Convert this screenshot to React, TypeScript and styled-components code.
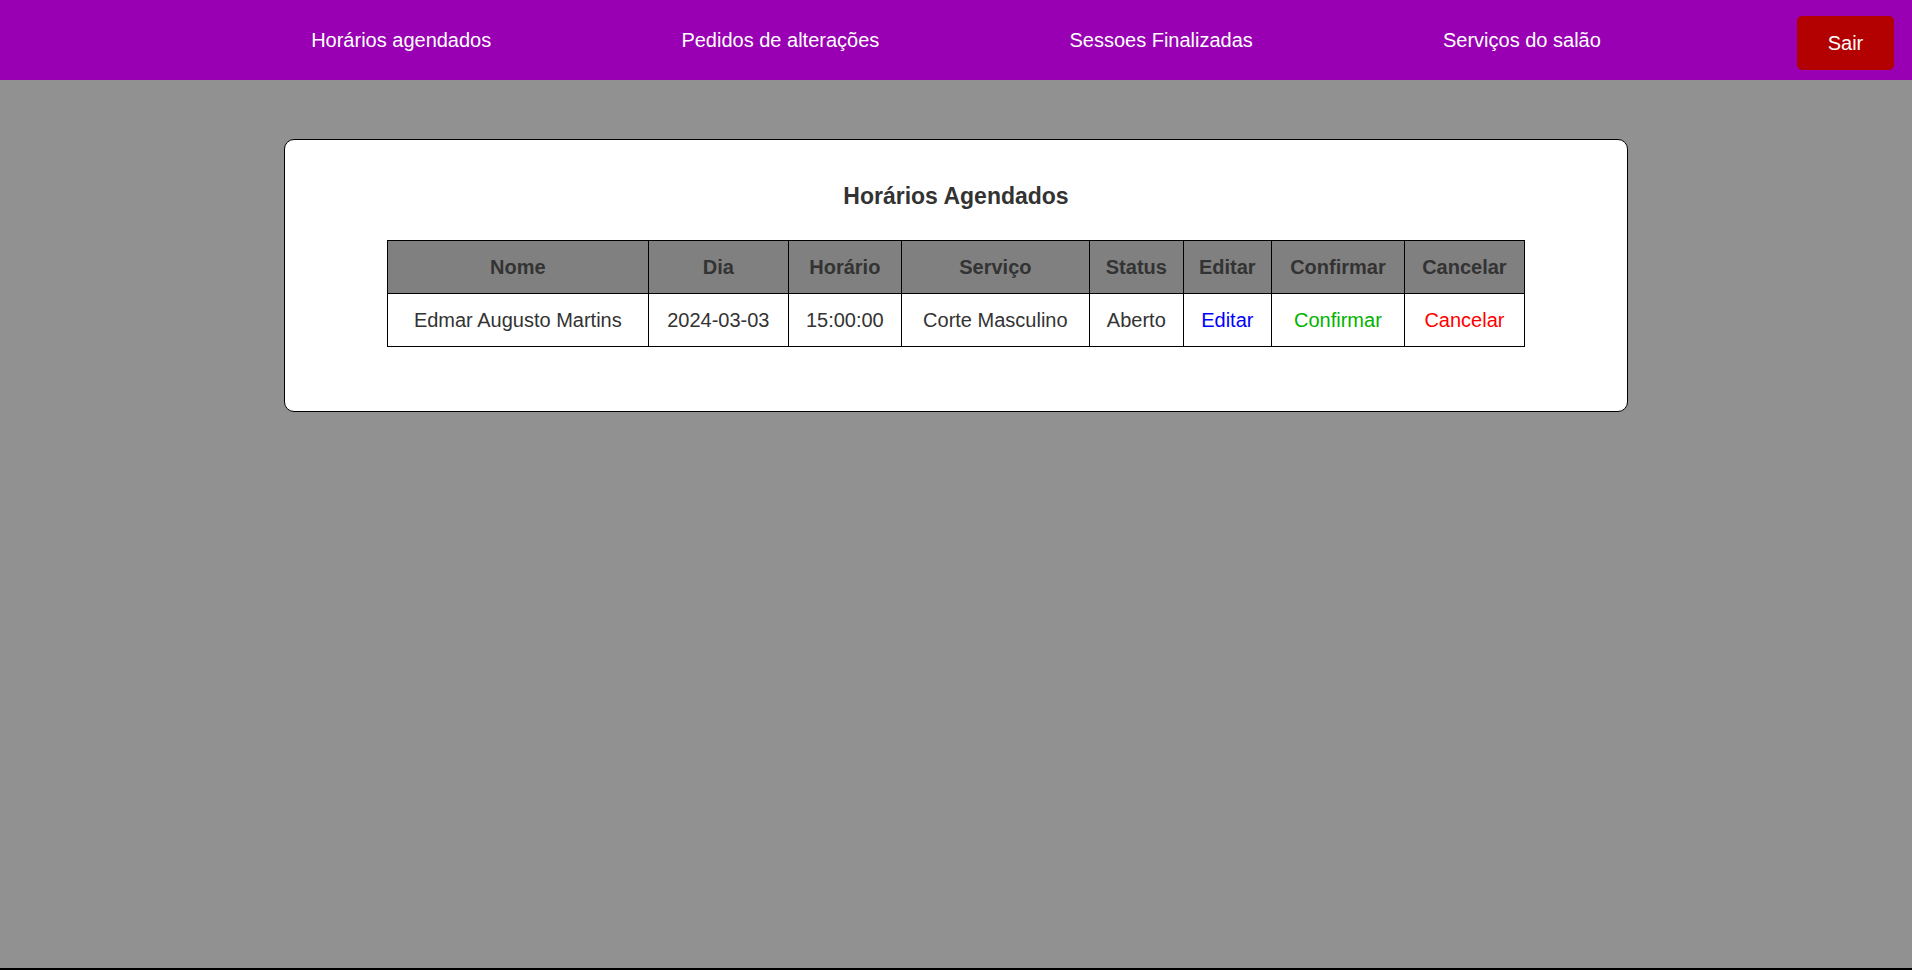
import React from 'react';
import styled, { createGlobalStyle } from 'styled-components';

type Agendamento = {
  nome: string;
  dia: string;
  horario: string;
  servico: string;
  status: string;
};

const GlobalStyle = createGlobalStyle`
  * {
    box-sizing: border-box;
  }

  body {
    margin: 0;
    font-family: 'Liberation Sans', Arial, sans-serif;
    background: #919191;
  }
`;

const Page = styled.div`
  display: flex;
  flex-direction: column;
  min-height: 100vh;
`;

const Header = styled.header`
  display: flex;
  align-items: center;
  height: 80px;
  padding: 0 18px 0 121px;
  background: #9900b3;
`;

const Nav = styled.nav`
  flex: 1;
  display: flex;
  justify-content: space-evenly;
  align-items: center;
`;

const NavLink = styled.a`
  color: #fff;
  font-size: 20px;
  text-decoration: none;
  cursor: pointer;
`;

const LogoutButton = styled.button`
  width: 97px;
  height: 54px;
  margin-left: 6px;
  margin-top: 6px;
  border: none;
  border-radius: 5px;
  background: #b30000;
  color: #fff;
  font-family: inherit;
  font-size: 20px;
  cursor: pointer;
`;

const Main = styled.main`
  flex: 1;
  padding-top: 59px;
`;

const Card = styled.section`
  width: 1344px;
  margin: 0 auto;
  padding: 43px 0 64px;
  background: #fff;
  border: 1px solid #000;
  border-radius: 10px;
`;

const Title = styled.h2`
  margin: 0 0 30px;
  text-align: center;
  color: #333;
  font-size: 23px;
  font-weight: 700;
`;

const Table = styled.table`
  width: 1138px;
  margin: 0 auto;
  border-collapse: collapse;
  font-size: 20px;
  line-height: 24px;
  color: #333;
`;

const HeadCell = styled.th`
  padding: 14px 10px;
  border: 1px solid #000;
  background: #808080;
  font-weight: 700;
  text-align: center;
`;

const Cell = styled.td<{ $tone?: string }>`
  padding: 14px 10px;
  border: 1px solid #000;
  text-align: center;
  color: ${ ({ $tone }) => $tone || '#333' };
  cursor: ${ ({ $tone }) => ($tone ? 'pointer' : 'default') };
`;

const Footer = styled.footer`
  height: 2px;
  background: #000;
`;

const agendamentos: Agendamento[] = [
  {
    nome: 'Edmar Augusto Martins',
    dia: '2024-03-03',
    horario: '15:00:00',
    servico: 'Corte Masculino',
    status: 'Aberto',
  },
];

const colunas = ['Nome', 'Dia', 'Horário', 'Serviço', 'Status', 'Editar', 'Confirmar', 'Cancelar'];

const links = ['Horários agendados', 'Pedidos de alterações', 'Sessoes Finalizadas', 'Serviços do salão'];

const App = () => (
  <Page>
    <GlobalStyle />
    <Header>
      <Nav>
        {links.map((link) => <NavLink key={link}>{link}</NavLink>)}
      </Nav>
      <LogoutButton>Sair</LogoutButton>
    </Header>
    <Main>
      <Card>
        <Title>Horários Agendados</Title>
        <Table>
          <thead>
            <tr>
              {colunas.map((coluna) => <HeadCell key={coluna}>{coluna}</HeadCell>)}
            </tr>
          </thead>
          <tbody>
            {agendamentos.map((item) => (
              <tr key={item.nome + item.horario}>
                <Cell>{item.nome}</Cell>
                <Cell>{item.dia}</Cell>
                <Cell>{item.horario}</Cell>
                <Cell>{item.servico}</Cell>
                <Cell>{item.status}</Cell>
                <Cell $tone='#0000ff'>Editar</Cell>
                <Cell $tone='#00b300'>Confirmar</Cell>
                <Cell $tone='#ff0000'>Cancelar</Cell>
              </tr>
            ))}
          </tbody>
        </Table>
      </Card>
    </Main>
    <Footer />
  </Page>
);

export default App;
